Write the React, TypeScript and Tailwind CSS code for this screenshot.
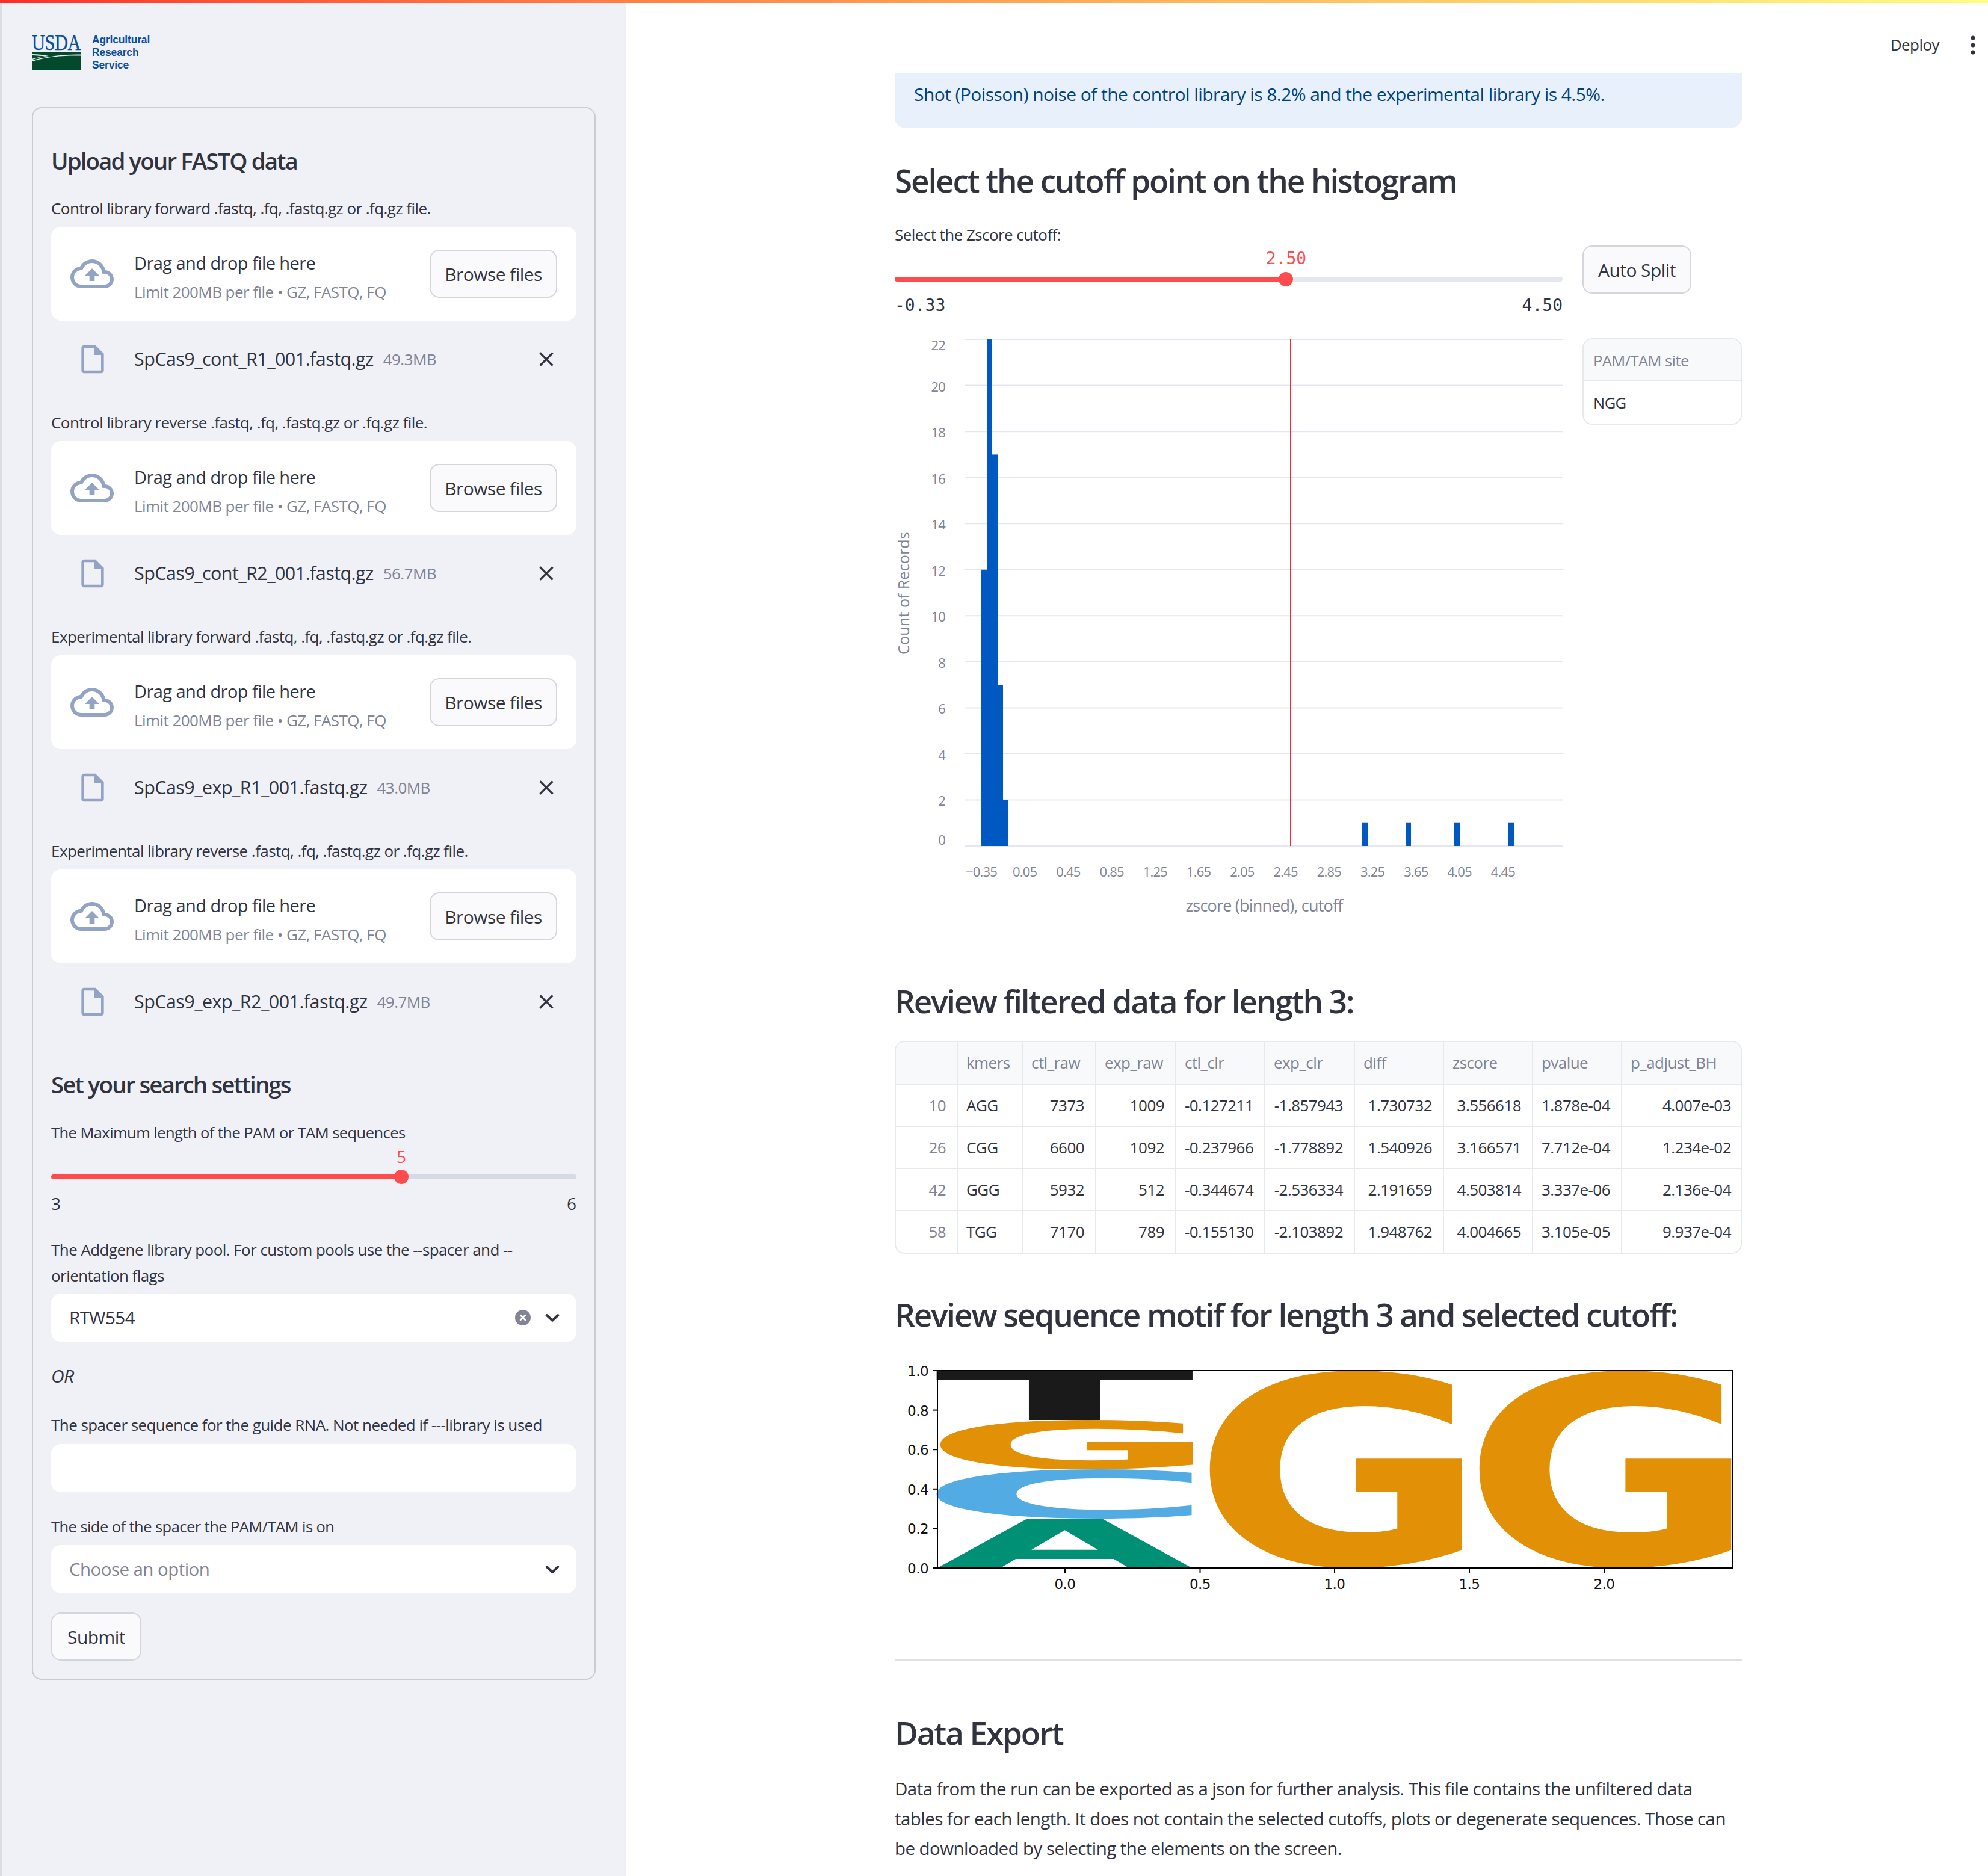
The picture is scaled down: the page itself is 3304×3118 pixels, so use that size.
import React from 'react';

const fileBlocks = [
  { label: 'Control library forward .fastq, .fq, .fastq.gz or .fq.gz file.', name: 'SpCas9_cont_R1_001.fastq.gz', size: '49.3MB' },
  { label: 'Control library reverse .fastq, .fq, .fastq.gz or .fq.gz file.', name: 'SpCas9_cont_R2_001.fastq.gz', size: '56.7MB' },
  { label: 'Experimental library forward .fastq, .fq, .fastq.gz or .fq.gz file.', name: 'SpCas9_exp_R1_001.fastq.gz', size: '43.0MB' },
  { label: 'Experimental library reverse .fastq, .fq, .fastq.gz or .fq.gz file.', name: 'SpCas9_exp_R2_001.fastq.gz', size: '49.7MB' },
];

const columns = [
  { name: '', width: 'w-[102px]' },
  { name: 'kmers', width: 'w-[108px]' },
  { name: 'ctl_raw', width: 'w-[122px]' },
  { name: 'exp_raw', width: 'w-[133px]' },
  { name: 'ctl_clr', width: 'w-[148px]' },
  { name: 'exp_clr', width: 'w-[149px]' },
  { name: 'diff', width: 'w-[148px]' },
  { name: 'zscore', width: 'w-[148px]' },
  { name: 'pvalue', width: 'w-[148px]' },
  { name: 'p_adjust_BH', width: '' },
];

const rows = [
  ['10', 'AGG', '7373', '1009', '-0.127211', '-1.857943', '1.730732', '3.556618', '1.878e-04', '4.007e-03'],
  ['26', 'CGG', '6600', '1092', '-0.237966', '-1.778892', '1.540926', '3.166571', '7.712e-04', '1.234e-02'],
  ['42', 'GGG', '5932', '512', '-0.344674', '-2.536334', '2.191659', '4.503814', '3.337e-06', '2.136e-04'],
  ['58', 'TGG', '7170', '789', '-0.155130', '-2.103892', '1.948762', '4.004665', '3.105e-05', '9.937e-04'],
];

const h2Class = 'h-[70px] leading-[70px] text-[53px] tracking-[-0.04em] font-semibold text-[#31333f] whitespace-nowrap';
const h3Class = 'h-[50px] leading-[50px] text-[38.500px] tracking-[-0.05em] font-semibold text-[#31333f]';

function CloudIcon() {
  return (
    <svg viewBox="0 0 24 24" className="w-[72px] h-[72px] shrink-0 text-[#93a3c4]" fill="currentColor">
      <path d="M19.35 10.04C18.67 6.59 15.64 4 12 4 9.11 4 6.6 5.64 5.35 8.04 2.34 8.36 0 10.91 0 14c0 3.31 2.69 6 6 6h13c2.76 0 5-2.24 5-5 0-2.64-2.05-4.78-4.65-4.96zM19 18H6c-2.21 0-4-1.79-4-4 0-2.05 1.53-3.76 3.56-3.97l1.07-.11.5-.95C8.08 7.14 9.94 6 12 6c2.62 0 4.88 1.86 5.39 4.43l.3 1.5 1.53.11c1.56.1 2.78 1.41 2.78 2.96 0 1.65-1.35 3-3 3zM8 13h2.55v3h2.9v-3H16l-4-4z" />
    </svg>
  );
}

function FileIcon() {
  return (
    <svg viewBox="0 0 24 24" className="w-14 h-14 shrink-0 text-[#93a3c4]" fill="currentColor">
      <path d="M14 2H6c-1.1 0-1.99.9-1.99 2L4 20c0 1.1.89 2 1.99 2H18c1.1 0 2-.9 2-2V8l-6-6zM6 20V4h7v5h5v11H6z" />
    </svg>
  );
}

function CloseIcon() {
  return (
    <svg viewBox="0 0 24 24" className="w-10 h-10 shrink-0 text-[#31333f]" fill="currentColor">
      <path d="M19 6.41 17.59 5 12 10.59 6.41 5 5 6.41 10.59 12 5 17.59 6.41 19 12 13.41 17.59 19 19 17.59 13.41 12z" />
    </svg>
  );
}

function Chevron() {
  return (
    <svg viewBox="0 0 24 24" className="w-8 h-8 shrink-0" fill="none" stroke="#31333f" strokeWidth="3" strokeLinecap="round" strokeLinejoin="round">
      <path d="M5 9l7 6.5L19 9" />
    </svg>
  );
}

function FileBlock({ label, name, size }: { label: string; name: string; size: string }) {
  return (
    <div className="mb-[53px]">
      <div className="h-10 leading-10 text-[26px] text-[#31333f]">{label}</div>
      <div className="mt-[11px] h-[156px] rounded-2xl bg-white flex items-center pl-8 pr-8">
        <CloudIcon />
        <div className="ml-[34px] flex-1 pt-[10px]">
          <div className="text-[29px] leading-[50px] text-[#31333f]">Drag and drop file here</div>
          <div className="text-[26px] leading-[47px] text-[#808495]">Limit 200MB per file • GZ, FASTQ, FQ</div>
        </div>
        <Button className="w-[212px] h-20">Browse files</Button>
      </div>
      <div className="mt-8 h-16 flex items-center pl-[41px] pr-[30px]">
        <FileIcon />
        <div className="ml-[41px] text-[30.500px] text-[#31333f]">{name}</div>
        <div className="ml-4 text-[26px] text-[#808495] flex-1">{size}</div>
        <CloseIcon />
      </div>
    </div>
  );
}

function Button({ children, className }: { children: React.ReactNode; className: string }) {
  return (
    <div className={`${className} shrink-0 flex items-center justify-center rounded-2xl border-2 border-[#d5d6db] bg-[#fafafc] text-[30px] text-[#31333f]`}>
      {children}
    </div>
  );
}

function Slider({ pct, value, min, max, mono, track }: { pct: number; value: string; min: string; max: string; mono?: boolean; track: string }) {
  const face = mono ? 'font-["DejaVu_Sans_Mono",monospace] tracking-normal' : 'tracking-normal';
  return (
    <div className={`${face} text-[28px]`}>
      <div className="relative h-10">
        <div className="absolute -translate-x-1/2 leading-10 text-[#ff4b4b]" style={{ left: `${pct}%` }}>{value}</div>
      </div>
      <div className={`relative mt-[10px] h-2 rounded-full ${track}`}>
        <div className="h-2 rounded-full bg-[#ff4b4b]" style={{ width: `${pct}%` }} />
        <div className="absolute top-[-8px] -ml-3 w-6 h-6 rounded-full bg-[#ff4b4b]" style={{ left: `${pct}%` }} />
      </div>
      <div className="mt-[20px] h-10 leading-10 flex justify-between text-[#31333f]">
        <span>{min}</span>
        <span>{max}</span>
      </div>
    </div>
  );
}

function Field({ children, className = '' }: { children: React.ReactNode; className?: string }) {
  return <div className={`${className} h-20 rounded-2xl bg-white flex items-center pl-[30px] pr-[24px] text-[29.500px]`}>{children}</div>;
}

function Logo() {
  return (
    <div className="flex ml-[50px] pt-[58px] h-[178px]">
      <svg viewBox="0 0 82 58" className="w-[82px] h-[58px] overflow-visible">
        <text x="0" y="25" fontFamily="Liberation Serif" fontSize="36" fill="#0b4ea2" stroke="#0b4ea2" strokeWidth="0.4" textLength="81" lengthAdjust="spacingAndGlyphs">USDA</text>
        <path d="M1 29h80v3.500C56 32 30 35 1 42z" fill="#03492c" />
        <path d="M1 32c9 0 17 1 27 3-10 1-18 3-27 6z" fill="#eff1f6" />
        <path d="M1 34c8 .2 14 1 21 1.500-8 1-15 2.500-21 4z" fill="#03492c" />
        <path d="M1 44c24-8 52-10 80-9.500V58H1z" fill="#03492c" />
      </svg>
      <div className="ml-[18px] -mt-[2px] font-['Liberation_Sans',sans-serif] tracking-[-0.01em] font-bold text-[17.500px] leading-[21px] text-[#0b4ea2]">
        <div>Agricultural</div>
        <div>Research</div>
        <div>Service</div>
      </div>
    </div>
  );
}

function Sidebar() {
  return (
    <aside className="w-[1040px] shrink-0 bg-[#eff1f6] border-l-[3px] border-[#dcdde0]">
      <Logo />
      <div className="ml-[50px] w-[937px] h-[2614px] border-2 border-[#c8ccd3] rounded-2xl px-[30px] pt-[62px]">
        <h3 className={h3Class}>Upload your FASTQ data</h3>
        <div className="mt-[34px]">
          {fileBlocks.map((b) => (
            <FileBlock key={b.name} {...b} />
          ))}
        </div>
        <h3 className={`mt-[80px] ${h3Class}`}>Set your search settings</h3>
        <div className="mt-[35px] h-10 leading-10 text-[25.500px] text-[#31333f]">The Maximum length of the PAM or TAM sequences</div>
        <Slider pct={66.67} value="5" min="3" max="6" track="bg-[#d5dae5]" />
        <div className="mt-[36px] text-[26px] leading-[43px] text-[#31333f]">
          The Addgene library pool. For custom pools use the --spacer and --<br />orientation flags
        </div>
        <Field className="mt-2 text-[#31333f]">
          <span className="flex-1">RTW554</span>
          <svg viewBox="0 0 26 26" className="w-[26px] h-[26px] mr-[20px]">
            <circle cx="13" cy="13" r="13" fill="#808495" />
            <path d="M9 9l8 8M17 9l-8 8" stroke="#fff" strokeWidth="2.500" strokeLinecap="round" />
          </svg>
          <Chevron />
        </Field>
        <div className="mt-[37px] h-10 leading-10 text-[30px] italic text-[#31333f]">OR</div>
        <div className="mt-[41px] h-10 leading-10 text-[26px] text-[#31333f]">The spacer sequence for the guide RNA. Not needed if ---library is used</div>
        <Field className="mt-3"><span /></Field>
        <div className="mt-[37px] h-10 leading-10 text-[25.500px] text-[#31333f]">The side of the spacer the PAM/TAM is on</div>
        <Field className="mt-[11px] text-[#808495]">
          <span className="flex-1">Choose an option</span>
          <Chevron />
        </Field>
        <Button className="mt-8 w-[150px] h-20">Submit</Button>
      </div>
    </aside>
  );
}

function Histogram() {
  const y = (v: number) => 1407 - v * 38.27;
  const bars = [
    { x: 1631, v: 12 },
    { x: 1640, v: 22 },
    { x: 1649, v: 17 },
    { x: 1658, v: 7 },
    { x: 1667, v: 2 },
    { x: 2264, v: 1 },
    { x: 2336, v: 1 },
    { x: 2417, v: 1 },
    { x: 2507, v: 1 },
  ];
  const ticks = ['−0.35', '0.05', '0.45', '0.85', '1.25', '1.65', '2.05', '2.45', '2.85', '3.25', '3.65', '4.05', '4.45'];
  // first and last y labels are nudged inside the plot, as in the vega output
  const labelY = (v: number) => (v === 0 ? 1405 : v === 22 ? 583 : y(v) + 10);
  return (
    <svg viewBox="1487 550 1110 980" className="mt-[21px] w-[1110px] h-[980px]" fontFamily="Open Sans">
      {Array.from({ length: 12 }, (_, i) => i * 2).map((v) => (
        <g key={v}>
          <line x1="1604" x2="2597" y1={y(v)} y2={y(v)} stroke="#e4e7ef" strokeWidth="2" />
          <text x="1571" y={labelY(v)} textAnchor="end" fontSize="22" letterSpacing="-0.8" fill="#808495">{v}</text>
        </g>
      ))}
      {bars.map((b) => (
        <rect key={b.x} x={b.x} y={y(b.v)} width="9" height={b.v * 38.27} fill="#0059c1" />
      ))}
      <line x1="2145" x2="2145" y1="565" y2="1407" stroke="#ee2a3c" strokeWidth="2" />
      {ticks.map((t, i) => (
        <text key={t} x={1631 + i * 72.25} y="1458" textAnchor="middle" fontSize="22" letterSpacing="-0.8" fill="#808495">{t}</text>
      ))}
      <text x="2101" y="1516" textAnchor="middle" fontSize="27" letterSpacing="-0.8" fill="#808495">zscore (binned), cutoff</text>
      <text transform="translate(1511 987) rotate(-90)" textAnchor="middle" fontSize="25" letterSpacing="0.2" fill="#808495">Count of Records</text>
    </svg>
  );
}

const glyphBox: Record<string, number[]> = {
  G: [0.042, 0.75, -0.014, 0.742],
  C: [0.052, 0.675, -0.014, 0.742],
  T: [0.007, 0.68, 0, 0.729],
  A: [0.005, 0.769, 0, 0.729],
};

function Letter({ ch, x0, x1, y0, y1, fill }: { ch: string; x0: number; x1: number; y0: number; y1: number; fill: string }) {
  const [l, r, b, t] = glyphBox[ch];
  const sx = (x1 - x0) / (r - l);
  const sy = (y1 - y0) / (t - b);
  return (
    <g transform={`translate(${x0 - l * sx} ${y1 + b * sy}) scale(${sx} ${sy})`}>
      <text fontSize="1" fontFamily="DejaVu Sans" fontWeight="700" fill={fill}>{ch}</text>
    </g>
  );
}

function MotifPlot() {
  const ly = [0, 0.2, 0.4, 0.6, 0.8, 1];
  const lx = [{ x: 1770, t: '0.0' }, { x: 1994.500, t: '0.5' }, { x: 2218, t: '1.0' }, { x: 2442, t: '1.5' }, { x: 2666, t: '2.0' }];
  return (
    <svg viewBox="1487 2260 1408 390" className="mt-[40px] w-[1408px] h-[390px]" fontFamily="DejaVu Sans">
      <Letter ch="A" x0={1558} x1={1981} y0={2524} y1={2606} fill="#009075" />
      <Letter ch="C" x0={1558} x1={1984} y0={2442} y1={2524} fill="#52ace3" />
      <Letter ch="G" x0={1558} x1={1984} y0={2360} y1={2442} fill="#e29006" />
      <Letter ch="T" x0={1558} x1={1984} y0={2278} y1={2360} fill="#1a1a1a" />
      <Letter ch="G" x0={2006} x1={2431} y0={2278} y1={2606} fill="#e29006" />
      <Letter ch="G" x0={2454} x1={2879} y0={2278} y1={2606} fill="#e29006" />
      <rect x="1558" y="2278" width="1321" height="328" fill="none" stroke="#000" strokeWidth="2" />
      {ly.map((v) => {
        const p = 2606 - v * 328;
        return (
          <g key={v}>
            <line x1="1550" x2="1558" y1={p} y2={p} stroke="#000" strokeWidth="2" />
            <text x="1543" y={p + 9} textAnchor="end" fontSize="23" fill="#111">{v.toFixed(1)}</text>
          </g>
        );
      })}
      {lx.map((v) => (
        <g key={v.t}>
          <line x1={v.x} x2={v.x} y1="2606" y2="2614" stroke="#000" strokeWidth="2" />
          <text x={v.x} y="2641" textAnchor="middle" fontSize="23" fill="#111">{v.t}</text>
        </g>
      ))}
    </svg>
  );
}

function DataTable() {
  return (
    <div className="mt-[31px] rounded-2xl border-2 border-[#e8e9ec] overflow-hidden">
      <table className="w-full table-fixed border-collapse text-[26px] whitespace-nowrap">
        <thead>
          <tr className="h-[70px] bg-[#f8f9fb] text-[#808495]">
            {columns.map((c) => (
              <th key={c.name} className={`${c.width} border-r-2 last:border-r-0 border-b-2 border-[#e8e9ec] text-left font-normal pl-[14px] pr-1`}>{c.name}</th>
            ))}
          </tr>
        </thead>
        <tbody>
          {rows.map((r) => (
            <tr key={r[0]} className="h-[70px] border-b-2 last:border-b-0 border-[#e8e9ec] text-[#31333f]">
              {r.map((cell, i) => (
                <td key={i} className={`border-r-2 last:border-r-0 border-[#e8e9ec] pl-[14px] pr-[18px] last:pr-4 ${i === 0 ? 'text-right text-[#808495]' : i === 1 ? 'text-left' : 'text-right'}`}>{cell}</td>
              ))}
            </tr>
          ))}
        </tbody>
      </table>
    </div>
  );
}

function Main() {
  return (
    <main className="relative flex-1 min-w-0 bg-white pl-[447px] pr-[409px]">
      <div className="absolute right-[21px] top-[55px] flex items-center text-[26px] text-[#31333f]">
        <span className="mr-[52px]">Deploy</span>
        <svg viewBox="0 0 8 32" className="w-2 h-8">
          <circle cx="4" cy="4" r="3.500" fill="#31333f" />
          <circle cx="4" cy="16" r="3.500" fill="#31333f" />
          <circle cx="4" cy="28" r="3.500" fill="#31333f" />
        </svg>
      </div>
      <div className="mt-[122px] h-[90px] rounded-b-2xl bg-[#e8f0fb] pl-8 pt-[10px] leading-[50px] text-[30px] text-[#004280]">
        Shot (Poisson) noise of the control library is 8.2% and the experimental library is 4.5%.
      </div>
      <h2 className={`mt-[53px] ${h2Class}`}>Select the cutoff point on the histogram</h2>
      <div className="mt-[35px] flex gap-[33px]">
        <div className="w-[1110px] shrink-0">
          <div className="h-10 leading-10 text-[26px] text-[#31333f]">Select the Zscore cutoff:</div>
          <Slider pct={58.6} value="2.50" min="-0.33" max="4.50" mono track="bg-[#e4e7ef]" />
          <Histogram />
        </div>
        <div className="w-[265px]">
          <Button className="mt-[38px] w-[181px] h-20">Auto Split</Button>
          <div className="mt-[74px] rounded-2xl border-2 border-[#e8e9ec] overflow-hidden text-[25.500px]">
            <div className="h-[70px] leading-[70px] bg-[#f8f9fb] border-b-2 border-[#e8e9ec] pl-4 text-[#808495]">PAM/TAM site</div>
            <div className="h-[70px] leading-[70px] pl-4 text-[#31333f]">NGG</div>
          </div>
        </div>
      </div>
      <h2 className={`mt-[100px] ${h2Class}`}>Review filtered data for length 3:</h2>
      <DataTable />
      <h2 className={`mt-[66px] ${h2Class}`}>Review sequence motif for length 3 and selected cutoff:</h2>
      <MotifPlot />
      <hr className="mt-[108px] border-t-2 border-[#e0e1e4]" />
      <h2 className={`mt-[85px] ${h2Class}`}>Data Export</h2>
      <p className="mt-[33px] text-[29.500px] leading-[49.500px] text-[#31333f]">
        Data from the run can be exported as a json for further analysis. This file contains the unfiltered data<br />
        tables for each length. It does not contain the selected cutoffs, plots or degenerate sequences. Those can<br />
        be downloaded by selecting the elements on the screen.
      </p>
    </main>
  );
}

export default function App() {
  return (
    <div className='relative h-[3118px] overflow-hidden font-["Open_Sans",sans-serif] tracking-[-0.035em]'>
      <div className="absolute inset-x-0 top-0 z-10 h-[5px] bg-gradient-to-r from-[#ff2b2b] to-[#fffd80]" />
      <div className="flex h-full">
        <Sidebar />
        <Main />
      </div>
    </div>
  );
}
